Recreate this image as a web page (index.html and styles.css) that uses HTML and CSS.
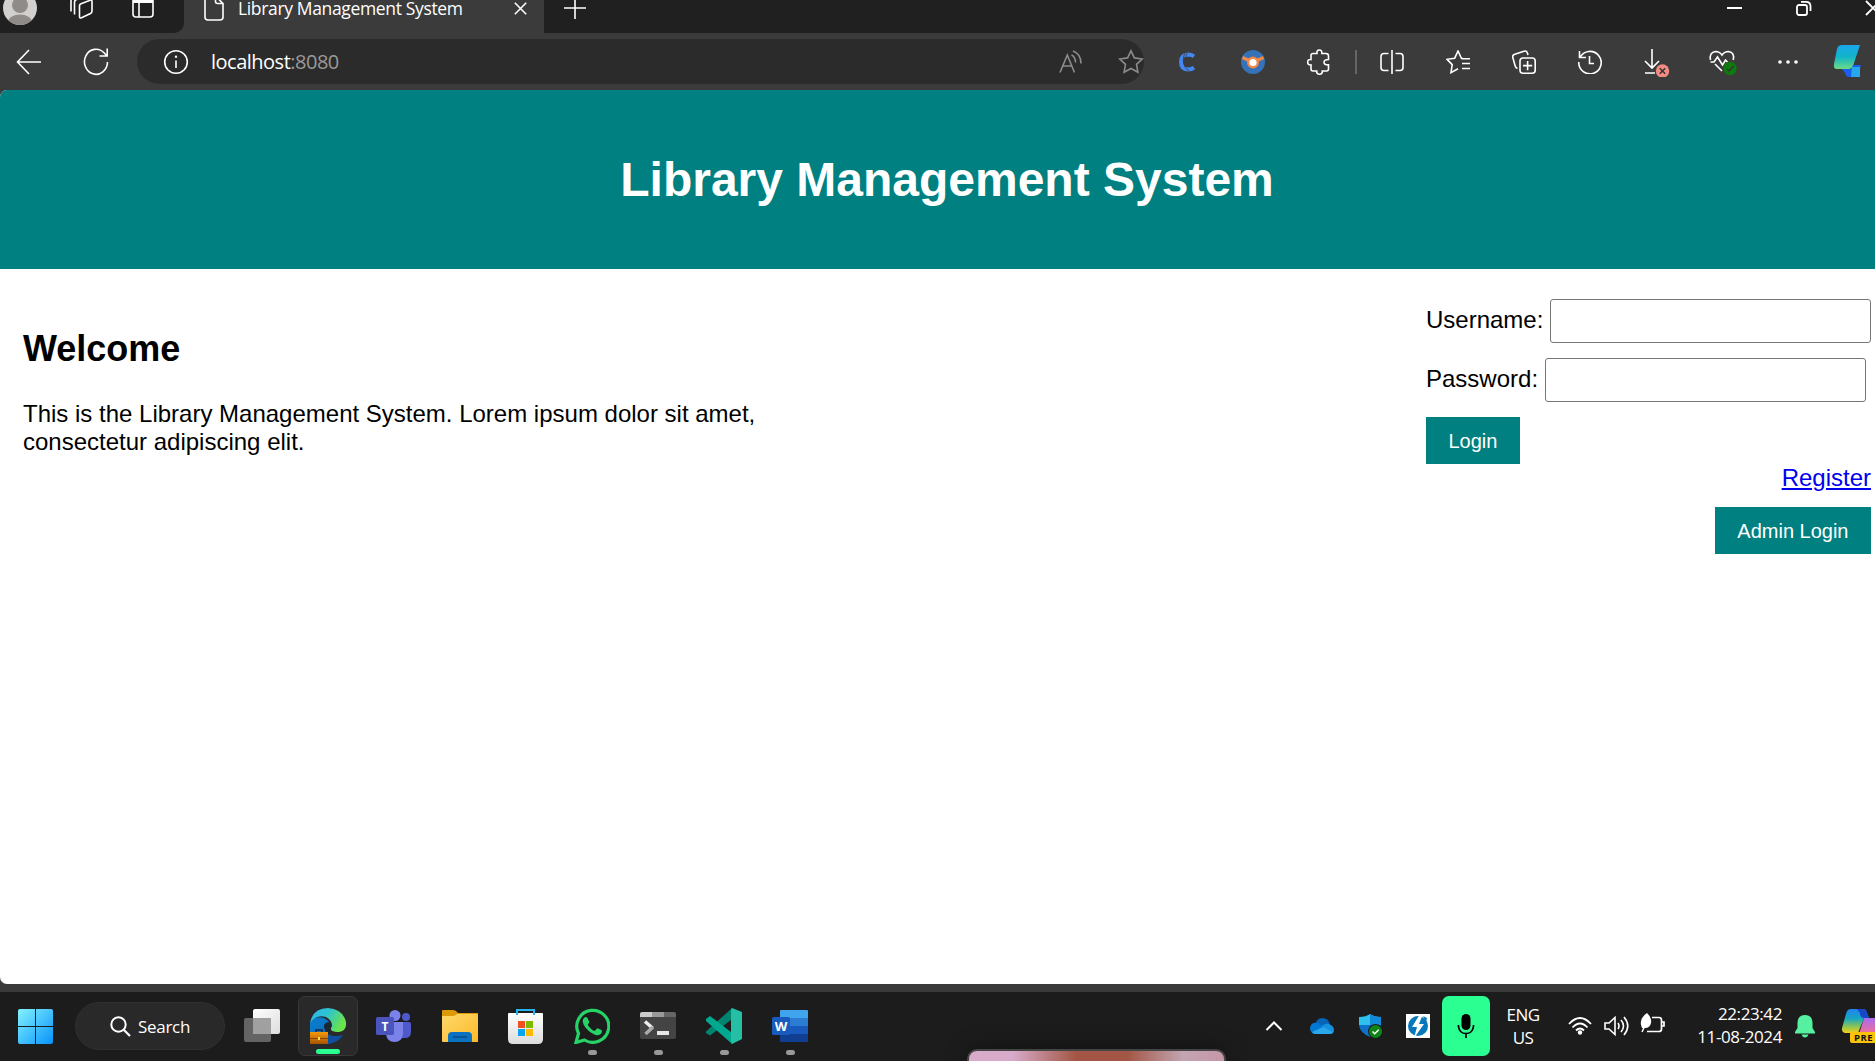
FILE: index.html
```html
<!DOCTYPE html>
<html lang="en">
<head>
<meta charset="utf-8">
<title>Library Management System</title>
<link rel="stylesheet" href="styles.css">
</head>
<body>
<div class="desktop">
  <div class="tabstrip">
    <div class="strip-left">
      <svg class="avatar" width="34" height="34" viewBox="0 0 34 34"><defs><clipPath id="av"><circle cx="17" cy="17" r="17"/></clipPath></defs><circle cx="17" cy="17" r="17" fill="#d2d0ce"/><g clip-path="url(#av)" fill="#8f8b88"><circle cx="17" cy="14" r="8"/><ellipse cx="17" cy="31.500" rx="12" ry="8"/></g></svg>
      <svg class="i-work" width="26" height="26" viewBox="0 0 26 26"><g class="ln"><path d="M11.500 11v11.500q0 2 2 1.200l9-4.200q1.500-.8 1.500-2.500V7.500q0-2-2-1.200l-9 3.500q-1.500.6-1.500 2M6.500 20.500V8q0-1.600 1.500-2.300L18 2M3 17.500V7q0-1.600 1.500-2.300L13 1"/></g></svg>
      <svg class="i-tabs" width="22" height="22" viewBox="0 0 22 22"><rect class="ln" x="1" y="1" width="20" height="20" rx="3"/><path d="M1 2h20v5H1z" fill="#fff"/><path class="ln" d="M7 7v14"/></svg>
    </div>
    <div class="tab">
      <svg class="i-doc" width="20" height="26" viewBox="0 0 20 26"><path class="ln" d="M4 1h7.500L19 8.500V22q0 3-3 3H4q-3 0-3-3V4q0-3 3-3zM11.500 1v5.500q0 2 2 2H19"/></svg>
      <span class="tab-title">Library Management System</span>
      <svg class="i-x" width="13" height="13" viewBox="0 0 13 13"><path class="ln" d="M.8.8l11.400 11.400M12.200.8L.8 12.200"/></svg>
    </div>
    <svg class="i-plus" width="22" height="22" viewBox="0 0 22 22"><path class="ln" d="M11 0v22M0 11h22"/></svg>
    <div class="window-buttons">
      <svg width="16" height="16" viewBox="0 0 16 16"><path d="M0 8h15" stroke="#fff" stroke-width="2"/></svg>
      <svg width="16" height="16" viewBox="0 0 16 16"><g fill="none" stroke="#fff" stroke-width="1.800"><rect x="1" y="5" width="10" height="10" rx="2"/><path d="M5 1.800h5q4.500 0 4.500 4.500V11"/></g></svg>
      <svg width="16" height="16" viewBox="0 0 16 16"><path d="M1 1l14 14M15 1L1 15" stroke="#fff" stroke-width="1.800"/></svg>
    </div>
  </div>

  <div class="toolbar">
    <svg class="i-back" width="26" height="26" viewBox="0 0 26 26"><path class="ln" d="M25 13H1.500M13 1L1.500 13 13 25"/></svg>
    <svg class="i-reload" width="28" height="30" viewBox="0 0 28 30"><path class="ln" d="M25.500 15a11.500 12.500 0 1 1-3.500-9.200L25 9M25.200 1.500V9H17.500"/></svg>
    <div class="address">
      <svg class="i-info" width="26" height="26" viewBox="0 0 26 26"><circle class="ln" cx="13" cy="13" r="11.300"/><path class="ln" d="M13 11.500V19"/><circle cx="13" cy="7.800" r="1.200" fill="#fff"/></svg>
      <span class="url">localhost<span class="port">:8080</span></span>
      <svg class="i-read" width="24" height="24" viewBox="0 0 24 24"><path class="dim" d="M1 22.500L8.300 5l7.200 17.500M3.700 16h9M12.500 5q4 2 4 7.500M14 1q8 3 8 12.500"/></svg>
      <svg class="i-star" width="26" height="26" viewBox="0 0 26 26"><path class="dim" d="M13 1.800l3.400 7.100 7.800 1.100-5.700 5.400 1.400 7.800-6.900-3.700-6.900 3.700 1.400-7.800L1.800 10l7.800-1.100z"/></svg>
    </div>
    <div class="tools">
      <span class="tool"><svg width="24" height="24" viewBox="0 0 24 24"><path d="M19 6.300Q16.300 4.500 13 4.500 6 5 6 12t7 7.500q3.500 0 6-1.800" fill="none" stroke="#4487f2" stroke-width="4"/><path d="M12.500 3Q8.500 7 9 13t5 8M10 3q-2 3-1.800 8" fill="none" stroke="#3b3b3b" stroke-width=".8"/></svg></span>
      <span class="tool"><svg width="24" height="24" viewBox="0 0 24 24"><circle cx="12" cy="12" r="12" fill="#3572b8"/><path d="M1.500 7.500L8 10.500M22.500 7.500L16 10.500" stroke="#f08a48" stroke-width="3.500"/><circle cx="12" cy="12.500" r="6" fill="#f08a48"/><circle cx="12" cy="12.500" r="3.600" fill="#fff"/></svg></span>
      <span class="tool"><svg width="26" height="26" viewBox="0 0 26 26"><path class="ln" d="M5 6.500q0-2 2-2h4q-.6-3.500 2.300-3.500t2.500 3.500H20q2.500 0 2.500 2.500v3.500q-4.500 0-4.500 2.700t4.500 2.700V20q0 2-2 2h-4.200q.3 3.200-2.800 3.200T10.700 22H7q-2 0-2-2v-4q-3.300.3-3.300-2.800T5 10.500z"/></svg></span>
      <span class="divider"></span>
      <span class="tool"><svg width="24" height="24" viewBox="0 0 24 24"><path class="ln" d="M8.500 3.500H4q-3 0-3 3v11q0 3 3 3h4.500M15.500 3.500H20q3 0 3 3v11q0 3-3 3h-4.500M12 0v24"/></svg></span>
      <span class="tool"><svg width="24" height="24" viewBox="0 0 24 24"><path class="ln" d="M17 8.500h-1.500L12 1 8.700 8.200 1 9.300l5.200 5.300-1.200 8 7-3.800M16 8.700h8M16 13.500h8M16 18.500h8"/></svg></span>
      <span class="tool"><svg width="24" height="24" viewBox="0 0 24 24"><rect class="ln" x="8" y="8" width="15.200" height="15.200" rx="3"/><path class="ln" d="M15.600 11v9.200M11 15.600h9.200M5.500 18.500Q3.800 18 3.200 16L.8 7.500q-.6-2.500 2-3.300L12 1.200q2.600-.8 3.400 1.700l.6 2"/></svg></span>
      <span class="tool"><svg width="24" height="24" viewBox="0 0 24 24"><path class="ln" d="M2 7.500A11.200 11.200 0 1 1 .8 12M1.500 1v6.500H8M11.500 6v7.500H16"/></svg></span>
      <span class="tool"><svg width="32" height="30" viewBox="0 0 32 30"><path class="ln" d="M12 2v18M5 14l7 7 7-7M5 26h10"/><circle cx="22.500" cy="24" r="6.700" fill="#f28b82"/><path d="M19.800 21.300l5.400 5.400M25.200 21.300l-5.400 5.400" stroke="#333" stroke-width="1.500"/></svg></span>
      <span class="tool"><svg width="32" height="30" viewBox="0 0 32 30"><path class="ln" d="M4.500 13Q3 5.500 9.500 4.500q4 0 6.500 3.500 2.500-3.500 6.500-3.500Q29 5.500 27.200 13M4.500 15H8l3.500-5 5 8 3-5 2 2M9 17l7 7"/><circle cx="24" cy="21.500" r="6.700" fill="#0e7a0d"/><path d="M21 22l2 2 4.500-5" fill="none" stroke="#333" stroke-width="1.500"/></svg></span>
      <span class="tool"><svg width="24" height="24" viewBox="0 0 24 24"><g fill="#fff"><circle cx="4" cy="12" r="1.800"/><circle cx="12" cy="12" r="1.800"/><circle cx="20" cy="12" r="1.800"/></g></svg></span>
      <span class="tool"><svg width="42" height="34" viewBox="0 0 42 34"><defs><linearGradient id="cp" x1="0" y1="0" x2="0" y2="1"><stop offset="0" stop-color="#1aa5ec"/><stop offset=".5" stop-color="#12b5c8"/><stop offset="1" stop-color="#6ddb83"/></linearGradient></defs><path d="M7 0h20l-7 21q-1 3-4 3H4q-4 0-3-5L4 4q1-4 5-4z" fill="url(#cp)"/><path d="M9 24h7q3 0 4-4h8l-4 12H16q-3 0-4-4z" fill="#1b5ff0"/><path d="M19 22h8v10h-9z" fill="#25a8ee"/></svg></span>
    </div>
  </div>

  <div class="page">
    <header class="banner"><h1>Library Management System</h1></header>
    <main class="content">
      <section class="welcome">
        <h2>Welcome</h2>
        <p>This is the Library Management System. Lorem ipsum dolor sit amet,<br>consectetur adipiscing elit.</p>
      </section>
      <section class="account">
        <form class="login">
          <div class="field"><label for="user">Username:</label><input id="user" type="text"></div>
          <div class="field"><label for="pass">Password:</label><input id="pass" type="password"></div>
          <button class="btn" type="button">Login</button>
        </form>
        <a class="register" href="#">Register</a>
        <button class="btn" type="button">Admin Login</button>
      </section>
    </main>
  </div>
  <div class="window-edge"></div>

  <div class="taskbar">
    <svg class="start" width="35" height="35" viewBox="0 0 35 35"><defs><linearGradient id="wn" x1="0" y1="0" x2="1" y2="1"><stop offset="0" stop-color="#83f3ff"/><stop offset="1" stop-color="#0792fb"/></linearGradient></defs><path d="M2 0h15v17H0V2q0-2 2-2zM18 0h15q2 0 2 2v15H18zM0 18h17v17H2q-2 0-2-2zM18 18h17v15q0 2-2 2H18z" fill="url(#wn)"/></svg>
    <div class="search"><svg width="21" height="21" viewBox="0 0 21 21"><circle cx="8.500" cy="8.500" r="7.200" fill="none" stroke="#fff" stroke-width="2"/><path d="M13.700 13.700L20 20" stroke="#fff" stroke-width="2.200"/></svg><span>Search</span></div>
    <div class="apps">
      <span class="app"><svg width="36" height="36" viewBox="0 0 36 36"><defs><linearGradient id="tv" x1="0" y1="0" x2="1" y2="1"><stop offset="0" stop-color="#fff"/><stop offset="1" stop-color="#ddd"/></linearGradient></defs><rect y="10" width="27" height="24" rx="2" fill="#646464"/><rect x="9" y="1" width="27" height="25" rx="2" fill="url(#tv)"/><path d="M9 10h18v16H11q-2 0-2-2z" fill="#a0a0a0"/></svg></span>
      <span class="app active"><svg width="36" height="36" viewBox="0 0 36 36"><defs><linearGradient id="e1" x1="0" y1="0" x2="1" y2=".4"><stop offset="0" stop-color="#2fb5f2"/><stop offset=".5" stop-color="#2dc4cf"/><stop offset="1" stop-color="#6ae44c"/></linearGradient><linearGradient id="e2" x1="0" y1="0" x2="1" y2="1"><stop offset="0" stop-color="#087fd0"/><stop offset="1" stop-color="#1166b8"/></linearGradient><linearGradient id="e3" x1="0" y1="0" x2="0" y2="1"><stop offset="0" stop-color="#f39a08"/><stop offset="1" stop-color="#a85400"/></linearGradient></defs><path d="M0 16v20h18l6-2Q14 30 15 20q0-4 5-5-6-8-15-5-5 2-5 6z" fill="url(#e2)"/><path d="M0 15Q3 0 18 0q15 1 18 14 1 9-7 10-6 0-8-2-1-2 1-4 0-6-6-9Q6 6 0 15z" fill="url(#e1)"/><path d="M15 24q6 6 18 3-5 8-15 9H9q4-4 6-12z" fill="#104e9f"/><path d="M14 17q2-3 5-3 4 2 2 6-1 2 1 4-6-1-8-4z" fill="#1c2733"/><path d="M6 24v-2h6v2" fill="none" stroke="#17375c" stroke-width="2"/><path d="M0 24h18v12H0z" fill="url(#e3)"/><path d="M0 30h18v1H0z" fill="#8b4300"/><path d="M8 29h2v3H8z" fill="#ffdf48"/></svg></span>
      <span class="app"><svg width="36" height="36" viewBox="0 0 36 36"><circle cx="30" cy="9" r="4" fill="#5059c9"/><path d="M25 14h8q2 0 2 2v8q0 6-6 6h-4z" fill="#5059c9"/><circle cx="19" cy="7.500" r="5.500" fill="#7b83eb"/><path d="M10 14h17v12q-1 8-8.500 8T10 26z" fill="#7b83eb"/><rect y="9" width="18" height="18" rx="1.500" fill="#4b53bc"/><text x="9" y="22.500" text-anchor="middle" class="glyph" font-size="12">T</text></svg></span>
      <span class="app"><svg width="36" height="36" viewBox="0 0 36 36"><defs><linearGradient id="fo" x1="0" y1="0" x2="1" y2="1"><stop offset="0" stop-color="#ffd96b"/><stop offset="1" stop-color="#fbb92a"/></linearGradient></defs><path d="M1 2h10q3 0 5 3H36v8H0V3q0-1 1-1z" fill="#dd9a05"/><path d="M0 8h11q2 0 4-2h19.500q1.500 0 1.500 1.500V34H1q-1 0-1-1z" fill="url(#fo)"/><path d="M6 34v-6q0-4 4-4h16q4 0 4 4v6z" fill="#0b72c2"/><path d="M11 29h14" stroke="#07508e" stroke-width="1.800"/></svg></span>
      <span class="app"><svg width="36" height="36" viewBox="0 0 36 36"><defs><linearGradient id="st" x1="0" y1="0" x2="0" y2="1"><stop offset="0" stop-color="#fff"/><stop offset="1" stop-color="#dcdcdc"/></linearGradient></defs><path d="M1 5h33q1 0 1 1v25q0 5-5 5H5q-5 0-5-5V6q0-1 1-1z" fill="url(#st)"/><path d="M9 7V2h17v5" fill="none" stroke="#25b4ee" stroke-width="2"/><path d="M10 13h7v7h-7z" fill="#f25022"/><path d="M18 13h7v7h-7z" fill="#7fba00"/><path d="M10 21h7v7h-7z" fill="#00a4ef"/><path d="M18 21h7v7h-7z" fill="#ffb900"/></svg></span>
      <span class="app running"><svg width="36" height="36" viewBox="0 0 36 36"><path d="M2 34.500l2.500-9A16 16 0 1 1 10.500 32z" fill="none" stroke="#25d366" stroke-width="3.200"/><path d="M10 10q2-2 3.500 0l1.700 3.800q.3 1-1.500 3 3 5 7 6.300l2-2.400q.7-.7 1.500-.3l3.600 1.800q.7 3.500-3 4.800-4 1-10-4-7-6.500-6-11 .4-1.200 1.200-2z" fill="#25d366"/></svg></span>
      <span class="app running"><svg width="36" height="36" viewBox="0 0 36 36"><path d="M0 9h36v20q0 2-2 2H2q-2 0-2-2z" fill="#444"/><path d="M2 4h10v5H0V6q0-2 2-2z" fill="#ccc"/><path d="M12 4h12v5H12z" fill="#999"/><path d="M24 4h10q2 0 2 2v3H24z" fill="#666"/><path d="M5 13.500l7.500 6.500" stroke="#eee" stroke-width="3.500"/><path d="M13 19l-7.500 7" stroke="#aaa" stroke-width="3.500"/><path d="M17 25h12" stroke="#e7e7e7" stroke-width="4"/></svg></span>
      <span class="app running"><svg width="36" height="36" viewBox="0 0 36 36"><path d="M0 23.500L25 1v11L4 27.500 0 25z" fill="#00836f"/><path d="M0 11l4-3 21 16v11L0 13z" fill="#00a98f"/><path d="M26 0l10 4v27l-10 5q-1 0-1-2V2q0-2 1-2z" fill="#24bfa5"/></svg></span>
      <span class="app running"><svg width="36" height="36" viewBox="0 0 36 36"><path d="M9 2h26q1 0 1 1v7H8V3q0-1 1-1z" fill="#41a5ee"/><path d="M8 10h28v8H8z" fill="#2b7cd3"/><path d="M8 18h28v8H8z" fill="#185abd"/><path d="M8 26h28v7q0 1-1 1H9q-1 0-1-1z" fill="#103f91"/><rect y="9" width="18" height="18" rx="1.500" fill="#185abd"/><text x="9" y="22.500" text-anchor="middle" class="glyph" font-size="13">W</text></svg></span>
    </div>
    <div class="tray">
      <svg class="t-chev" width="18" height="12" viewBox="0 0 18 12"><path d="M1.500 10L9 2.500l7.500 7.500" fill="none" stroke="#fff" stroke-width="2"/></svg>
      <svg class="t-cloud" width="24" height="18" viewBox="0 0 24 18"><path d="M5 12Q5 1 12 1q7 0 8 7l-8 5z" fill="#0364b8"/><path d="M0 11Q1 5 7 6l9 5-7 6H5q-5-1-5-6z" fill="#0078d4"/><path d="M12 9q3-3 7-2 5 2 5 6 0 4-4 4h-8z" fill="#1490df"/><path d="M2 15l11-5 10 5q-1 2-4 2H5q-2 0-3-2z" fill="#28a8ea"/></svg>
      <svg class="t-shield" width="24" height="24" viewBox="0 0 24 24"><path d="M0 3q7 0 11-3 4 3 11 3v8H0z" fill="#2fc1ee"/><path d="M11 0q4 3 11 3v8H11z" fill="#1389da"/><path d="M0 11h11v12Q1 19 0 11z" fill="#0d72c8"/><path d="M11 11h11q-1 8-11 12z" fill="#0b58a8"/><circle cx="16.500" cy="17.500" r="7.500" fill="#1c1c1c"/><circle cx="16.500" cy="17.500" r="6.500" fill="#0d8518"/><path d="M13.500 17.500l2.200 2.200 4-4" fill="none" stroke="#fff" stroke-width="1.500"/></svg>
      <svg class="t-bolt" width="24" height="24" viewBox="0 0 24 24"><path fill="#fff" d="M0 0h24v24H0z"/><circle cx="12" cy="12" r="10" fill="#0878bd"/><path d="M14 0L6 13h5L8 24l10-14h-5l4-10z" fill="#fff"/><path d="M17 2l4 2-1 4z" fill="#0878bd"/></svg>
      <div class="mic"><svg width="18" height="26" viewBox="0 0 18 26"><rect x="4.500" y="1" width="9" height="16" rx="4.500"/><path d="M1.500 12v1.500q1 7 7.500 7t7.500-7V12M9 20v5" fill="none" stroke="#000" stroke-width="1.700"/></svg></div>
      <div class="lang"><span>ENG</span><span>US</span></div>
      <svg class="t-wifi" width="24" height="20" viewBox="0 0 24 20"><g fill="none" stroke="#fff" stroke-width="1.800"><path d="M1 8q11-12 22 0M4.500 11.500q7.500-8 15 0M8 14.500q4-4 8 0"/></g><circle cx="12" cy="16.500" r="2.200" fill="#fff"/></svg>
      <svg class="t-vol" width="25" height="22" viewBox="0 0 25 22"><g fill="none" stroke="#fff" stroke-width="1.600"><path d="M1 8h4l6-5.500v17L5 14H1zM14 8q2 3 0 6M17 5q5 6 0 12M20 2q7.500 9 0 18"/></g></svg>
      <svg class="t-batt" width="25" height="22" viewBox="0 0 25 22"><path d="M12 4.500h7q2.500 0 2.500 2.500v9q0 2.500-2.500 2.500H7M22 9h2v4h-2" fill="none" stroke="#fff" stroke-width="1.700"/><path d="M7 0q5 5 4 10-1 5-6 5H2Q-2 6 7 0z" fill="#fff"/><path d="M7 8L2 19" stroke="#fff" stroke-width="1.500"/></svg>
      <div class="clock"><span class="time">22:23:42</span><span class="date">11-08-2024</span></div>
      <svg class="t-bell" width="20" height="24" viewBox="0 0 20 24"><path d="M2.500 14V8.500Q3 1 10 1t7.500 7.500V14l2.500 4v1.500H0V18zM6.500 20.500h7q-1 3-3.500 3t-3.500-3z" fill="#55f0a0"/></svg>
      <svg class="t-pre" width="33" height="34" viewBox="0 0 33 34"><defs><linearGradient id="p1" x1="0" y1="0" x2="0" y2="1"><stop offset="0" stop-color="#2382f0"/><stop offset=".4" stop-color="#16a7c3"/><stop offset=".75" stop-color="#93c64e"/><stop offset="1" stop-color="#f6cf18"/></linearGradient><linearGradient id="p2" x1="0" y1="0" x2="0" y2="1"><stop offset="0" stop-color="#a96af2"/><stop offset="1" stop-color="#f47190"/></linearGradient></defs><path d="M9 0h12q3 0 4 4l2 5h-5L16 24H5q-6 0-5-5L4 5q1-5 5-5z" fill="url(#p1)"/><path d="M15 0h6q3 0 4 4l2 5h-6q-3-1-3-5z" fill="#1747c7"/><path d="M22 9h11v16H17z" fill="url(#p2)"/><path d="M10 23h23v11H10q-2 0-2-2v-7q0-2 2-2z" fill="#ffc20a"/><text x="12" y="32" class="pre">PRE</text></svg>
    </div>
  </div>
  <div class="peek"></div>
</div>
</body>
</html>
```
FILE: styles.css
```css
* { box-sizing: border-box; }
body { margin: 0; background: #3b3b3b; }
svg { display: block; flex: none; }
.desktop { position: relative; display: flex; flex-direction: column; width: 1875px; height: 1061px; overflow: hidden; background: #3b3b3b; font-family: "Open Sans", "Noto Sans", sans-serif; }
.ln { fill: none; stroke: #fff; stroke-width: 1.6; }
.dim { fill: none; stroke: #8c8c8c; stroke-width: 1.6; }

/* Tab strip */
.tabstrip { display: flex; align-items: flex-end; height: 33px; flex: none; background: #202020; overflow: hidden; }
.strip-left { display: flex; align-items: flex-end; width: 184px; height: 33px; padding-left: 3px; border-bottom-right-radius: 10px; background: #202020; box-shadow: 10px 10px 0 0 #3b3b3b; }
.avatar { margin-bottom: 8px; }
.i-work { margin: 0 0 13px 31px; }
.i-tabs { margin: 0 0 15px 38px; }
.tab { display: flex; align-items: flex-end; width: 360px; height: 33px; padding-left: 20px; background: #3b3b3b; }
.i-doc { margin-bottom: 12px; }
.tab-title { width: 260px; margin: 0 0 12px 14px; color: #fff; font-size: 17.5px; line-height: 26px; letter-spacing: -0.35px; white-space: nowrap; }
.i-x { margin: 0 0 18px 16px; }
.i-plus { margin: 0 0 14px 20px; }
.window-buttons { display: flex; gap: 53px; margin: 0 -6px 17px auto; }

/* Toolbar */
.toolbar { display: flex; align-items: center; height: 57px; flex: none; overflow: hidden; }
.i-back { margin-left: 16px; }
.i-reload { margin-left: 40px; }
.address { display: flex; align-items: center; width: 1030px; height: 45px; margin-left: 27px; padding-left: 26px; border-radius: 23px; background: #2b2b2b; }
.url { margin-left: 22px; width: 822px; color: #fff; font-size: 20px; line-height: 28px; letter-spacing: -0.5px; }
.port { color: #9a9a9a; }
.i-read { margin-left: 26px; }
.i-star { margin-left: 35px; }
.tools { display: flex; align-items: center; margin-left: 10px; }
.tool { display: flex; justify-content: center; align-items: center; width: 66px; height: 45px; flex: none; }
.divider { width: 2px; height: 24px; margin: 0 2px 0 3px; background: #666; }

/* Web page */
.page { width: 1894px; height: 894px; flex: none; overflow: hidden; border-radius: 7px; background: #fff; font-family: "Liberation Sans", Arial, sans-serif; font-size: 24px; line-height: 28px; color: #000; }
.banner { display: flex; justify-content: center; align-items: center; height: 179px; background: #008080; }
.banner h1 { margin: 0; color: #fff; font-size: 48px; line-height: 54px; }
.content { display: flex; justify-content: space-between; padding: 30px 23px 0; }
.welcome h2 { margin: 29px 0 30px; font-size: 36px; line-height: 42px; }
.welcome p { margin: 0; }
.account { display: flex; flex-direction: column; align-items: flex-end; width: 445px; }
.login { width: 100%; }
.field { display: flex; align-items: center; gap: 7px; height: 44px; margin-bottom: 15px; }
.field label { padding-bottom: 3px; }
.field input { width: 321px; height: 44px; border: 1px solid #767676; border-radius: 3px; background: #fff; }
.btn { display: block; height: 47px; padding: 0 22.5px; border: 0; background: #008080; color: #fff; font: 20px/24px "Liberation Sans", Arial, sans-serif; }
.register { margin-bottom: 15px; color: #00e; }

/* Taskbar */
.window-edge { height: 8px; flex: none; background: #3a3a3a; }
.taskbar { display: flex; align-items: center; height: 69px; flex: none; padding-bottom: 1px; background: #1c1c1c; color: #fff; }
.start { margin-left: 18px; }
.search { display: flex; align-items: center; gap: 7px; width: 150px; height: 48px; margin-left: 22px; padding-left: 34px; border: 1px solid #303030; border-radius: 24px; background: #292929; font-size: 17px; letter-spacing: -0.3px; }
.apps { display: flex; gap: 6px; margin-left: 7px; }
.app { position: relative; display: flex; justify-content: center; align-items: center; width: 60px; height: 60px; border-radius: 7px; }
.active { border: 1px solid #383838; background: #292929; }
.active::after, .running::after { content: ""; position: absolute; bottom: 1px; width: 24px; height: 5px; border-radius: 3px; background: #2bff91; }
.running::after { width: 9px; background: #999; }
.glyph { fill: #fff; font-family: "Open Sans", sans-serif; font-weight: 700; }
.tray { display: flex; align-items: center; margin-left: auto; }
.t-cloud { margin-left: 27px; }
.t-shield { margin-left: 25px; }
.t-bolt { margin-left: 23px; }
.mic { display: flex; justify-content: center; align-items: center; width: 48px; height: 60px; margin-left: 12px; border-radius: 7px; background: #2bff91; }
.lang, .clock { display: flex; flex-direction: column; font-size: 17px; line-height: 23.500px; }
.lang { align-items: center; width: 66px; letter-spacing: -0.5px; }
.t-wifi { margin-left: 12px; }
.t-vol { margin-left: 12px; }
.t-batt { margin: 0 0 4px 11px; }
.clock { align-items: flex-end; width: 117px; margin-bottom: 2px; letter-spacing: -0.4px; }
.t-bell { margin-left: 13px; }
.t-pre { margin-left: 27px; }
.pre { fill: #111; font: 700 9.5px "Open Sans", sans-serif; letter-spacing: .5px; }

/* Popup rising over the taskbar */
.peek { position: absolute; left: 967px; bottom: -10px; width: 259px; height: 22px; border: 2px solid #454545; border-radius: 10px; background: linear-gradient(90deg, #d8abca 0 17%, #a35645 42% 62%, #c3a5b1 84%, #c696a8); box-shadow: 0 0 20px #111; }
```
